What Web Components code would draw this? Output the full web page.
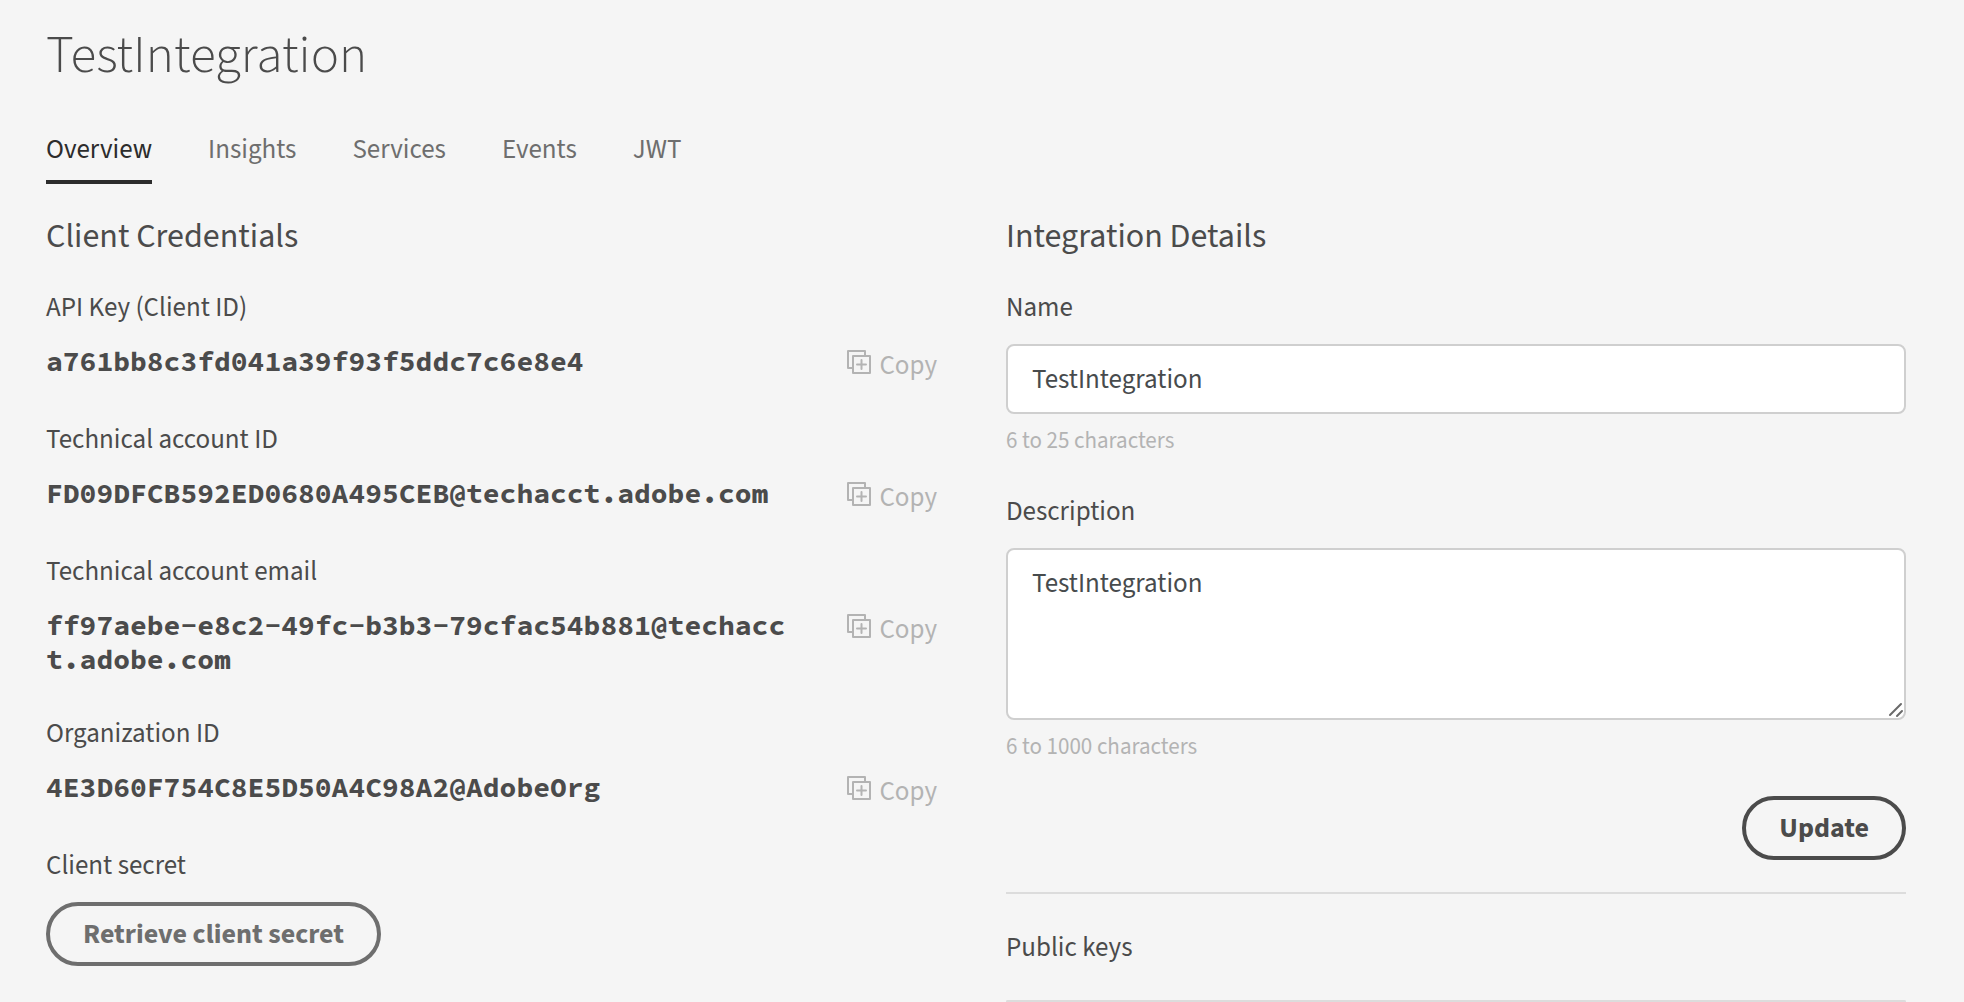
<!DOCTYPE html>
<html lang="en">
<head>
<meta charset="utf-8">
<title>TestIntegration</title>
<style>
  html { background: #f5f5f5; }
  body { margin: 0; }
</style>
</head>
<body>
<integration-page></integration-page>

<template id="page-template">
  <style>
    :host {
      --text: #4b4b4b;
      --muted: #6e6e6e;
      --faint: #b3b3b3;
      --strong: #2c2c2c;
      --field-border: #cfcfcf;
      --rule: #dcdcdc;
      display: block;
      box-sizing: border-box;
      min-height: 100vh;
      padding: 24px 58px 0 46px;
      background: #f5f5f5;
      color: var(--text);
      font: 27px/36px "Source Sans 3", "Noto Sans CJK SC", sans-serif;
    }
    h1 { margin: 0 0 46px; font-size: 53px; line-height: 64px; font-weight: 300; }
    h2 { margin: 0 0 33px; font-size: 34px; line-height: 40px; font-weight: 400; }
    main { display: grid; grid-template-columns: minmax(0, 1fr) minmax(0, 1fr); gap: 60px; padding-top: 33px; }
    .credentials { display: flex; flex-direction: column; gap: 40px; padding-right: 9px; }
    .secret { display: flex; flex-direction: column; align-items: flex-start; gap: 18px; }
    .fields { display: flex; flex-direction: column; gap: 36px; }
    .actions { display: flex; justify-content: flex-end; padding: 32px 0; }
    .keys { border-top: 2px solid var(--rule); padding-top: 36px; }
    .keys h3 { margin: 0 0 34px; font-size: 27px; line-height: 36px; font-weight: 400; }
    .key-list { border: 2px solid var(--rule); border-bottom: 0; border-radius: 8px 8px 0 0; }
  </style>
  <h1>TestIntegration</h1>
  <tab-bar>
    <tab-link href="#overview" selected>Overview</tab-link>
    <tab-link href="#insights">Insights</tab-link>
    <tab-link href="#services">Services</tab-link>
    <tab-link href="#events">Events</tab-link>
    <tab-link href="#jwt">JWT</tab-link>
  </tab-bar>
  <main>
    <section>
      <h2>Client Credentials</h2>
      <div class="credentials">
        <credential-item label="API Key (Client ID)">a761bb8c3fd041a39f93f5ddc7c6e8e4</credential-item>
        <credential-item label="Technical account ID">FD09DFCB592ED0680A495CEB@techacct.adobe.com</credential-item>
        <credential-item label="Technical account email">ff97aebe-e8c2-49fc-b3b3-79cfac54b881@techacct.adobe.com</credential-item>
        <credential-item label="Organization ID">4E3D60F754C8E5D50A4C98A2@AdobeOrg</credential-item>
        <div class="secret">
          <span>Client secret</span>
          <pill-button quiet>Retrieve client secret</pill-button>
        </div>
      </div>
    </section>
    <section>
      <h2>Integration Details</h2>
      <div class="fields">
        <form-field label="Name" value="TestIntegration" hint="6 to 25 characters"></form-field>
        <form-field label="Description" value="TestIntegration" hint="6 to 1000 characters" multiline></form-field>
      </div>
      <div class="actions"><pill-button>Update</pill-button></div>
      <div class="keys">
        <h3>Public keys</h3>
        <div class="key-list"></div>
      </div>
    </section>
  </main>
</template>

<template id="tab-bar-template">
  <style>
    :host { display: block; }
    nav { display: flex; gap: 56px; }
  </style>
  <nav><slot></slot></nav>
</template>

<template id="tab-link-template">
  <style>
    :host { display: block; }
    a {
      display: block;
      padding-bottom: 14px;
      border-bottom: 4px solid transparent;
      color: var(--muted);
      line-height: 32px;
      text-decoration: none;
    }
    :host([selected]) a { color: var(--strong); border-color: var(--strong); }
  </style>
  <a><slot></slot></a>
</template>

<template id="credential-template">
  <style>
    :host { display: flex; flex-direction: column; gap: 18px; }
    .row { display: flex; align-items: flex-start; gap: 54px; }
    .value {
      flex: 1;
      min-width: 0;
      font: 700 28px/34px "Source Code Pro", "Liberation Mono", monospace;
      word-break: break-all;
    }
    button {
      display: flex;
      flex: none;
      align-items: flex-start;
      gap: 8px;
      margin: 0;
      padding: 6px 0 0;
      border: 0;
      background: none;
      color: var(--faint);
      font: inherit;
      line-height: 32px;
    }
    svg { display: block; width: 24px; height: 24px; }
  </style>
  <span class="label"></span>
  <div class="row">
    <span class="value"><slot></slot></span>
    <button type="button">
      <svg viewBox="0 0 24 24" fill="none" stroke="currentColor" stroke-width="2" stroke-linejoin="round" aria-hidden="true">
        <path d="M6 18H1V1h17v5"/>
        <rect x="6" y="6" width="17" height="17"/>
        <path d="M14.500 10v9M10 14.500h9" stroke-linecap="round"/>
      </svg>
      <span>Copy</span>
    </button>
  </div>
</template>

<template id="field-template">
  <style>
    :host { display: block; }
    label { display: block; margin-bottom: 18px; }
    .box { position: relative; }
    input, textarea {
      display: block;
      box-sizing: border-box;
      width: 100%;
      margin: 0;
      border: 2px solid var(--field-border);
      border-radius: 8px;
      background: #fff;
      color: #474b4d;
      font: inherit;
      outline: 0;
    }
    input { height: 70px; padding: 0 24px; }
    textarea { height: 172px; padding: 16px 24px; resize: vertical; }
    textarea::-webkit-resizer { background: transparent; }
    .grip { display: none; position: absolute; right: 2px; bottom: 2px; width: 18px; height: 18px; pointer-events: none; }
    :host([multiline]) .grip { display: block; }
    .hint { display: block; margin-top: 10px; color: var(--faint); font-size: 23px; line-height: 34px; }
  </style>
  <label for="control"></label>
  <div class="box">
    <svg class="grip" viewBox="0 0 18 18" fill="none" stroke="#6a6a6a" stroke-width="2" stroke-linecap="round" aria-hidden="true">
      <path d="M4 15L15 4M11 16l5-5"/>
    </svg>
  </div>
  <span class="hint" id="hint"></span>
</template>

<template id="pill-template">
  <style>
    :host { display: block; }
    button {
      display: block;
      height: 64px;
      margin: 0;
      padding: 0 33px;
      border: 4px solid currentColor;
      border-radius: 32px;
      background: none;
      color: var(--text);
      font: inherit;
      font-size: 28px;
      font-weight: 700;
    }
    :host([quiet]) button { color: var(--muted); }
  </style>
  <button type="button"><slot></slot></button>
</template>

<script>
  class Templated extends HTMLElement {
    connectedCallback() {
      if (this.shadowRoot) return;
      const root = this.attachShadow({ mode: "open" });
      root.append(document.getElementById(this.constructor.template).content.cloneNode(true));
      this.fill(root);
    }
    fill() {}
  }

  class TabBar extends Templated { static template = "tab-bar-template"; }

  class TabLink extends Templated {
    static template = "tab-link-template";
    fill(root) {
      const link = root.querySelector("a");
      link.setAttribute("href", this.getAttribute("href"));
      if (this.hasAttribute("selected")) link.setAttribute("aria-current", "page");
    }
  }

  class CredentialItem extends Templated {
    static template = "credential-template";
    fill(root) {
      root.querySelector(".label").textContent = this.getAttribute("label");
      root.querySelector("button").addEventListener("click", () => {
        if (navigator.clipboard) navigator.clipboard.writeText(this.textContent);
      });
    }
  }

  class FormField extends Templated {
    static template = "field-template";
    fill(root) {
      const control = document.createElement(this.hasAttribute("multiline") ? "textarea" : "input");
      control.id = "control";
      control.setAttribute("aria-describedby", "hint");
      control.spellcheck = false;
      control.value = this.getAttribute("value");
      root.querySelector("label").textContent = this.getAttribute("label");
      root.querySelector(".box").prepend(control);
      root.querySelector(".hint").textContent = this.getAttribute("hint");
    }
  }

  class PillButton extends Templated { static template = "pill-template"; }

  class IntegrationPage extends Templated { static template = "page-template"; }

  customElements.define("tab-bar", TabBar);
  customElements.define("tab-link", TabLink);
  customElements.define("credential-item", CredentialItem);
  customElements.define("form-field", FormField);
  customElements.define("pill-button", PillButton);
  customElements.define("integration-page", IntegrationPage);
</script>
</body>
</html>
